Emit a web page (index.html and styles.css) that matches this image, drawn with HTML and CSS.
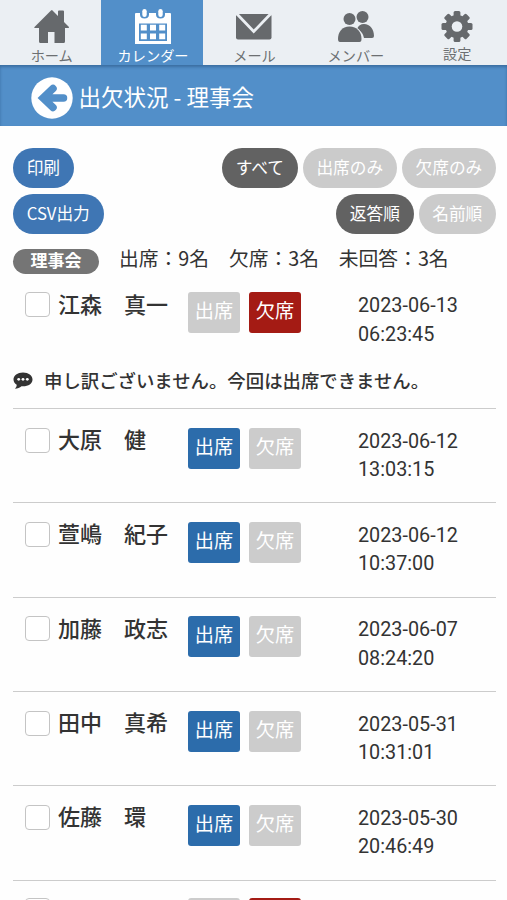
FILE: index.html
```html
<!DOCTYPE html>
<html lang="ja">
<head>
<meta charset="UTF-8" />
<meta name="viewport" content="width=device-width, initial-scale=1" />
<title>出欠状況 - 理事会</title>
<link rel="stylesheet" href="styles.css">
</head>
<body>
<nav class="tabs">
  <a class="tab">
    <svg width="38" height="36" viewBox="0 0 38 36"><path d="M19 0L25 6V1.500Q25 .5 26 .5H30Q31 .5 31 1.500V12L36 17Q36.500 18 35 18H32V31.500Q32 33 30.500 33H21.500V22H15V33H7.500Q6 33 6 31.500V18H2Q.5 18 1.500 17L18 .5Z"/></svg>
    <span>ホーム</span>
  </a>
  <a class="tab active">
    <svg width="38" height="36" viewBox="0 0 38 36"><path fill-rule="evenodd" d="M2 3H6V4.500Q6 8.500 10.500 8.500T15 4.500V3H22V4.500Q22 8.500 26.500 8.500T31 4.500V3H36Q37 3 37 4V34H1V4Q1 3 2 3ZM5 13.500V31H33V13.500Z"/><rect x="8.300" y="-1" width="4.400" height="8" rx="2.200"/><rect x="24.300" y="-1" width="4.400" height="8" rx="2.200"/><path d="M6.800 14.800h6v5.800h-6zM16 14.800h6v5.800h-6zM25.200 14.800h6v5.800h-6zM6.800 23.500h6v5.800h-6zM16 23.500h6v5.800h-6zM25.200 23.500h6v5.800h-6z"/></svg>
    <span>カレンダー</span>
  </a>
  <a class="tab">
    <svg width="38" height="36" viewBox="0 0 38 36"><rect x="1" y="4" width="35.500" height="25.500" rx="2"/><path class="line" d="M1.500 3.500L18.700 21.500L36 3.500"/></svg>
    <span>メール</span>
  </a>
  <a class="tab">
    <svg width="38" height="36" viewBox="0 0 38 36"><circle cx="25.500" cy="7" r="6"/><path d="M20 19Q22 14 27 14C33 14 37 19 37 26Q37 28 35 28H27Q26 22 20 19Z"/><circle class="cut" cx="12.500" cy="9" r="6"/><path class="cut" d="M1 29C1 22 5 16.500 12.500 16.500S24.500 22 24.500 29Q24.500 32 22.500 32H3Q1 32 1 29Z"/></svg>
    <span>メンバー</span>
  </a>
  <a class="tab settings">
    <svg width="38" height="36" viewBox="-19 -16.500 38 36"><g id="teeth"><rect x="-3.400" y="-15.500" width="6.800" height="31" rx="1.500"/><rect x="-15.500" y="-3.400" width="31" height="6.800" rx="1.500"/></g><use href="#teeth" transform="rotate(45)"/><circle r="11.500"/><circle class="hole" r="5.300"/></svg>
    <span>設定</span>
  </a>
</nav>

<header class="title-bar">
  <svg width="42" height="42" viewBox="0 0 42 42"><circle cx="21" cy="21" r="20.700"/><path d="M22 11.500L12 21L22 30.500M13 21H32.500"/></svg>
  <h1>出欠状況 - 理事会</h1>
</header>

<main>
  <div class="toolbar">
    <a class="pill blue">印刷</a>
    <div class="group">
      <a class="pill dark">すべて</a>
      <a class="pill">出席のみ</a>
      <a class="pill">欠席のみ</a>
    </div>
  </div>
  <div class="toolbar">
    <a class="pill blue">CSV出力</a>
    <div class="group">
      <a class="pill dark">返答順</a>
      <a class="pill">名前順</a>
    </div>
  </div>

  <div class="summary">
    <span class="badge">理事会</span>
    <span class="counts">出席：9名　欠席：3名　未回答：3名</span>
  </div>

  <ul class="list">
    <li class="row has-comment">
      <input type="checkbox">
      <span class="name">江森　真一</span>
      <span class="btn">出席</span>
      <span class="btn no">欠席</span>
      <span class="time">2023-06-13<br>06:23:45</span>
      <p class="comment">
        <svg width="20" height="18" viewBox="0 0 20 18"><path d="M10 .5C15.500 .5 19.500 3.500 19.500 7.500S15.500 14.300 10 14.300L8.500 14.200C6.800 15.800 4.500 16.700 2 16.700C3 15.700 3.700 14.500 3.700 12.800C1.700 11.500 .5 9.700 .5 7.500C.5 3.500 4.500 .5 10 .5Z"/><g fill="#fff"><circle cx="5.700" cy="7.300" r="1.400"/><circle cx="10" cy="7.300" r="1.400"/><circle cx="14.300" cy="7.300" r="1.400"/></g></svg>
        <span>申し訳ございません。今回は出席できません。</span>
      </p>
    </li>
    <li class="row">
      <input type="checkbox">
      <span class="name">大原　健</span>
      <span class="btn yes">出席</span>
      <span class="btn">欠席</span>
      <span class="time">2023-06-12<br>13:03:15</span>
    </li>
    <li class="row">
      <input type="checkbox">
      <span class="name">萱嶋　紀子</span>
      <span class="btn yes">出席</span>
      <span class="btn">欠席</span>
      <span class="time">2023-06-12<br>10:37:00</span>
    </li>
    <li class="row">
      <input type="checkbox">
      <span class="name">加藤　政志</span>
      <span class="btn yes">出席</span>
      <span class="btn">欠席</span>
      <span class="time">2023-06-07<br>08:24:20</span>
    </li>
    <li class="row">
      <input type="checkbox">
      <span class="name">田中　真希</span>
      <span class="btn yes">出席</span>
      <span class="btn">欠席</span>
      <span class="time">2023-05-31<br>10:31:01</span>
    </li>
    <li class="row">
      <input type="checkbox">
      <span class="name">佐藤　環</span>
      <span class="btn yes">出席</span>
      <span class="btn">欠席</span>
      <span class="time">2023-05-30<br>20:46:49</span>
    </li>
    <li class="row">
      <input type="checkbox">
      <span class="name"></span>
      <span class="btn"></span>
      <span class="btn no"></span>
    </li>
  </ul>
</main>
</body>
</html>
```
FILE: styles.css
```css
* {
  margin: 0;
  padding: 0;
  box-sizing: border-box;
}

body {
  background: #fefefe;
  color: #333;
  font-family: "Noto Sans CJK JP", sans-serif;
}

/* Tabs */
.tabs {
  display: grid;
  grid-template-columns: repeat(5, 1fr);
  height: 65px;
  background: #ebeff3;
}

.tab {
  display: flex;
  flex-direction: column;
  align-items: center;
  padding: 10px 0 0 2px;
  color: #6c6f72;
  font-size: 14.2px;
  line-height: 18px;
}

.tab.active {
  background: #528fc9;
  color: #fff;
}

.tab svg {
  overflow: visible;
  fill: #66696c;
}

.tab.active svg {
  fill: #fff;
}

.tab.settings span {
  margin-top: -2px;
}

.tab .line {
  fill: none;
  stroke: #ebeff3;
  stroke-width: 2.8;
}

.tab .cut {
  stroke: #ebeff3;
  stroke-width: 2;
  paint-order: stroke;
}

.tab .hole {
  fill: #ebeff3;
}

/* Title */
.title-bar {
  display: flex;
  align-items: center;
  gap: 5.5px;
  height: 61px;
  padding: 5px 0 0 31px;
  background: #528fc9;
  box-shadow: inset 0 2px 3px #3b6ea1;
  color: #fff;
}

.title-bar svg {
  fill: #fff;
}

.title-bar path {
  fill: none;
  stroke: #528fc9;
  stroke-width: 7.5;
  stroke-linecap: round;
}

.title-bar h1 {
  margin-top: -4px;
  font-size: 22.5px;
  font-weight: 400;
  line-height: 32px;
}

main {
  height: calc(100vh - 126px);
  padding: 22px 11px 0 13px;
  overflow: hidden;
}

/* Filter buttons */
.toolbar {
  display: flex;
  justify-content: space-between;
  height: 40px;
  margin-bottom: 5.5px;
}

.group {
  display: flex;
  gap: 5px;
}

.pill {
  height: 40px;
  padding: 0 13.7px;
  border-radius: 20px;
  background: #cbcbcb;
  color: #fff;
  font-size: 16.7px;
  line-height: 38px;
}

.pill.blue {
  background: #3f76b4;
}

.pill.dark {
  background: #626262;
}

.summary {
  display: flex;
  align-items: center;
  gap: 20px;
  height: 25px;
  margin-top: 15px;
}

.badge {
  width: 86px;
  height: 25px;
  border-radius: 13px;
  background: #757575;
  color: #fff;
  font-size: 17px;
  font-weight: 700;
  line-height: 21px;
  text-align: center;
}

.counts {
  margin-top: -7px;
  font-size: 19.8px;
  line-height: 25px;
  white-space: nowrap;
}

/* Members */
.list {
  list-style: none;
}

.row {
  display: grid;
  grid-template-columns: 45px 130px 61px 109px 1fr;
  align-items: start;
  height: 94.35px;
  padding-top: 18.5px;
  border-bottom: 1px solid #ccc;
}

.row.has-comment {
  grid-template-rows: 66px 1fr;
  height: 135.5px;
}

.row:last-child {
  padding-top: 17.5px;
}

.row input {
  appearance: none;
  width: 25px;
  height: 25px;
  margin-left: 12px;
  border: 1px solid #c4c4c4;
  border-radius: 4px;
  background: #fff;
}

.name {
  margin-top: -2.5px;
  font-size: 22px;
  font-weight: 500;
  line-height: 26px;
  white-space: nowrap;
}

.btn {
  width: 52px;
  height: 41px;
  border-radius: 3px;
  background: #ccc;
  color: #fff;
  font-size: 19.2px;
  line-height: 37px;
  text-align: center;
}

.btn.yes {
  background: #2c6cab;
}

.btn.no {
  background: #a41b14;
}

.time {
  font-family: Roboto, sans-serif;
  font-size: 19.8px;
  line-height: 28.5px;
}

.comment {
  display: flex;
  align-items: center;
  gap: 11px;
  grid-column: 1 / -1;
  height: 46px;
  font-size: 18.4px;
  font-weight: 500;
}

.comment span {
  margin-top: -2px;
}

.comment svg {
  fill: #333;
}
```
